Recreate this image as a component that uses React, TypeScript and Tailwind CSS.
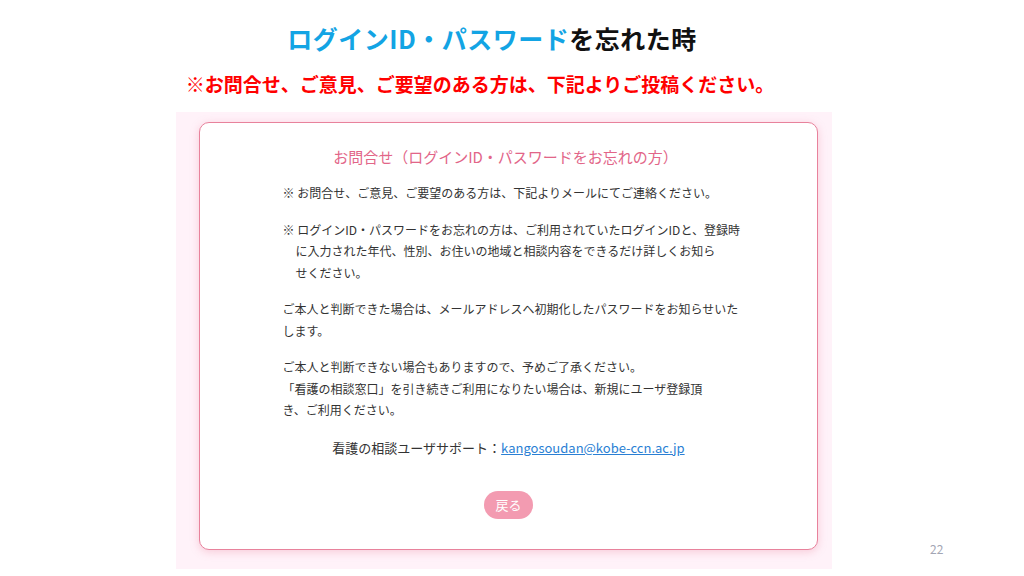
import React from "react";

const App: React.FC = () => {
  return (
    <div className="relative w-[1024px] h-[576px] overflow-hidden bg-white font-['Noto_Sans_CJK_JP','Noto_Sans',sans-serif]">
      {/* Slide heading */}
      <h1 className="pt-[20px] pr-[40px] text-center text-[25px] leading-[36px] font-bold tracking-[0.02em]">
        <span className="text-[#13a4e4]">ログインID・パスワード</span>
        <span className="text-[#111111]">を忘れた時</span>
      </h1>
      <p className="mt-[14px] pr-[64px] text-center text-[19px] leading-[28px] font-bold text-[#ff0000]">
        ※お問合せ、ご意見、ご要望のある方は、下記よりご投稿ください。
      </p>

      {/* Screen capture */}
      <div className="mt-[14px] ml-[176px] w-[656px] h-[457px] bg-[#fff2f9] pt-[10px] pl-[23px] pr-[14px] pb-[19px]">
        <div className="h-full rounded-[10px] border border-[#e8829c] bg-white pt-[23px] shadow-[0_2px_8px_rgba(232,130,156,0.35)]">
          <h2 className="pr-[6px] text-center text-[15px] leading-[22px] text-[#e26588]">
            お問合せ（ログインID・パスワードをお忘れの方）
          </h2>

          <div className="mx-auto mt-[14px] w-[452px] whitespace-nowrap text-[12px] leading-[21.5px] text-[#333333]">
            <p>※ お問合せ、ご意見、ご要望のある方は、下記よりメールにてご連絡ください。</p>
            <p className="mt-[15px] pl-[13px] indent-[-13px]">
              ※ ログインID・パスワードをお忘れの方は、ご利用されていたログインIDと、登録時
              <br />
              に入力された年代、性別、お住いの地域と相談内容をできるだけ詳しくお知ら
              <br />
              せください。
            </p>
            <p className="mt-[15px]">
              ご本人と判断できた場合は、メールアドレスへ初期化したパスワードをお知らせいた
              <br />
              します。
            </p>
            <p className="mt-[15px]">
              ご本人と判断できない場合もありますので、予めご了承ください。
              <br />
              「看護の相談窓口」を引き続きご利用になりたい場合は、新規にユーザ登録頂
              <br />
              き、ご利用ください。
            </p>
            <p className="mt-[16px] text-center text-[13px]">
              看護の相談ユーザサポート：
              <a className="text-[#2a7fd4] underline" href="#">
                kangosoudan@kobe-ccn.ac.jp
              </a>
            </p>
          </div>

          <button className="mx-auto mt-[33px] flex h-[28px] w-[49px] items-center justify-center rounded-full bg-[#f39bb1] text-[13px] text-white">
            戻る
          </button>
        </div>
      </div>

      {/* Page number */}
      <span className="absolute left-[930px] top-[540px] text-[12px] text-[#a3a6b4]">22</span>
    </div>
  );
};

export default App;
